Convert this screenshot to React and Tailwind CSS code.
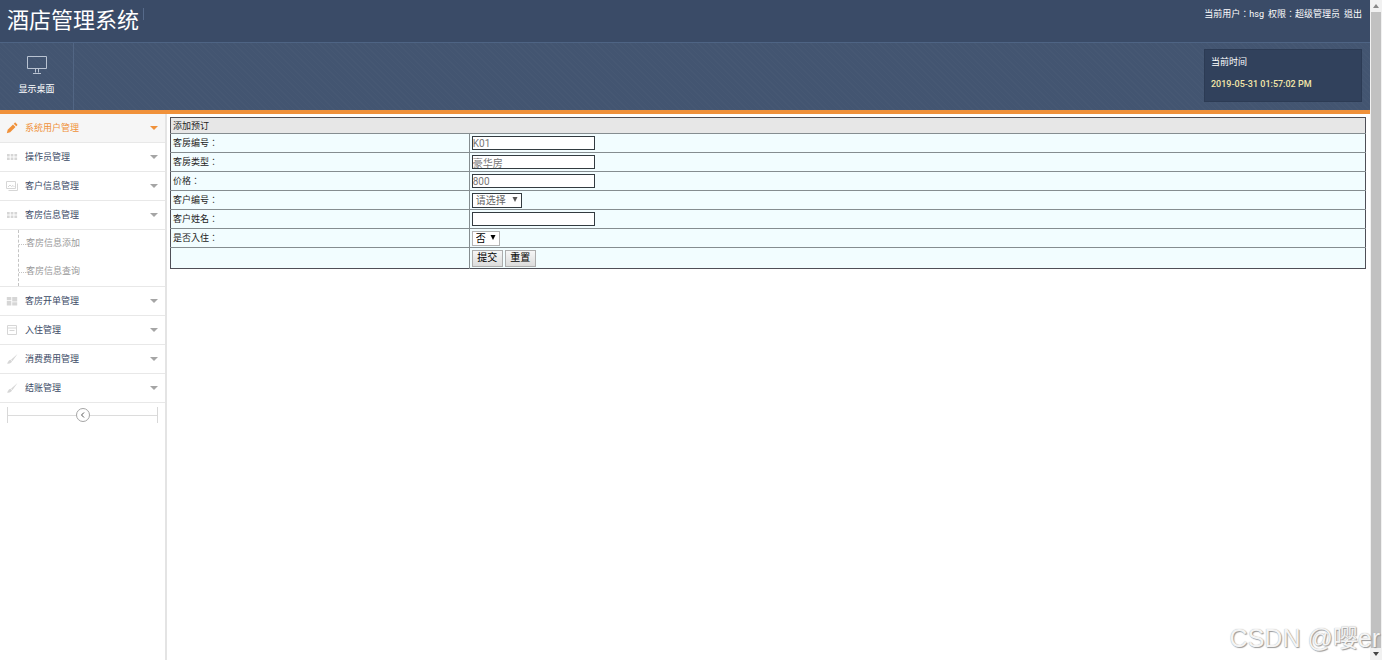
import React, { useState } from "react";

// Sidebar icons
const PencilIcon = () => (
  <svg className="w-3 h-3" viewBox="0 0 12 12" fill="currentColor" aria-hidden="true">
    <path d="M.8 11.200l.9-3.400L7 2.500l2.500 2.500-5.300 5.300z" />
    <path d="M7.700 1.800l.9-.9c.4-.4.8-.4 1.200 0l1.300 1.300c.4.4.4.8 0 1.200l-.9.9z" />
  </svg>
);

const GridIcon = () => (
  <svg className="w-3 h-3" viewBox="0 0 12 12" fill="currentColor" aria-hidden="true">
    <path d="M1 3h2.700v2.500H1zM4.700 3h2.700v2.500H4.700zM8.400 3h2.700v2.500H8.400zM1 6.500h2.700V9H1zM4.700 6.500h2.700V9H4.700zM8.400 6.500h2.700V9H8.400z" />
  </svg>
);

const PicturesIcon = () => (
  <svg className="w-3 h-3" viewBox="0 0 12 12" fill="none" stroke="currentColor" aria-hidden="true">
    <path d="M.5 1.500h9v7h-9zM2.500 10.500h9v-7M2 7l2-2 1.500 1.500L7 5.500 8.500 7" />
  </svg>
);

const BlocksIcon = () => (
  <svg className="w-3 h-3" viewBox="0 0 12 12" fill="currentColor" aria-hidden="true">
    <path d="M.8 2h4.500v3.200H.8zM.8 6h4.500v4.500H.8zM6.200 2h5v4.500h-5zM6.200 7.300h5v3.200h-5z" />
  </svg>
);

const CalendarIcon = () => (
  <svg className="w-3 h-3" viewBox="0 0 12 12" fill="none" stroke="currentColor" aria-hidden="true">
    <path d="M1.500 1.500h9v9h-9zM1.500 4h9M3.500 6.500h5" />
  </svg>
);

const BrushIcon = () => (
  <svg className="w-3 h-3" viewBox="0 0 12 12" fill="currentColor" aria-hidden="true">
    <path d="M11.500 1L6.500 8 5 6.700zM4.300 6.700L6 8.300C5.500 10.500 3 11 .8 10.600 2 10 2 7.300 4.300 6.700z" />
  </svg>
);

const Caret = () => (
  <svg className="w-2 h-1" viewBox="0 0 8 4" fill="currentColor" aria-hidden="true">
    <path d="M0 0h8L4 4z" />
  </svg>
);

const menus = [
  { name: "系统用户管理", icon: PencilIcon, active: true },
  { name: "操作员管理", icon: GridIcon },
  { name: "客户信息管理", icon: PicturesIcon },
  { name: "客房信息管理", icon: GridIcon, children: ["客房信息添加", "客房信息查询"] },
  { name: "客房开单管理", icon: BlocksIcon },
  { name: "入住管理", icon: CalendarIcon },
  { name: "消费费用管理", icon: BrushIcon },
  { name: "结账管理", icon: BrushIcon },
];

function Header() {
  return (
    <header className="border-b-4 border-[#f0913a] bg-[#435571] bg-[repeating-linear-gradient(45deg,#ffffff04_0px,#ffffff04_1px,transparent_1px,transparent_4px)] text-white">
      <div className="flex h-[42px] items-start justify-between bg-[#3a4b67] pl-[7px] pr-2">
        <div className="flex items-start">
          <h1 className="text-[22px] leading-[42px]">酒店管理系统</h1>
          <span className="ml-1 mt-2 h-3 w-px bg-[#566a8a]"></span>
        </div>
        <div className="flex gap-1 pt-2 font-[Roboto,'Noto_Sans_CJK_TC',sans-serif] text-[9px] leading-3">
          <span>当前用户：hsg</span>
          <span>权限：超级管理员</span>
          <a href="#logout">退出</a>
        </div>
      </div>
      <div className="flex h-[68px] justify-between border-t border-[#4e6484] pr-2">
        <button
          type="button"
          className="flex w-[74px] flex-col items-center gap-2 border-r border-[#526684] pt-3 text-[9px] leading-3"
        >
          <svg className="h-5 w-5" viewBox="0 0 20 20" fill="none" stroke="#b9c3d2" aria-hidden="true">
            <path d="M.5 1.500h19v12H.5zM8.500 13.500v4M11.500 13.500v4M6 18.500h8" />
          </svg>
          显示桌面
        </button>
        <div className="mt-1.5 h-[53px] w-[158px] border border-[#2c3b54] bg-[#31415c] px-1.5 pt-1.5 text-[9px] leading-3">
          <p>当前时间</p>
          <p className="mt-2 leading-4 font-medium text-[#f3e6a9]">2019-05-31 01:57:02 PM</p>
        </div>
      </div>
    </header>
  );
}

function Sidebar() {
  return (
    <aside className="w-[167px] shrink-0 border-r-2 border-[#e4e4e4] text-[9px] text-[#3b4a66]">
      <nav>
        {menus.map((menu) => (
          <div key={menu.name} className="border-b border-[#e8e8e8]">
            <a
              href="#menu"
              className={
                menu.active
                  ? "flex h-7 items-center bg-[#f6f6f6] pl-1.5 pr-[7px] text-[#f0913a]"
                  : "flex h-7 items-center pl-1.5 pr-[7px]"
              }
            >
              <span className={menu.active ? "text-[#f0913a]" : "text-[#d6d6d6]"}>
                <menu.icon />
              </span>
              <span className="ml-[7px] flex-1 pt-0.5">{menu.name}</span>
              <span className={menu.active ? "text-[#f0913a]" : "text-[#a5a5a5]"}>
                <Caret />
              </span>
            </a>
            {menu.children && (
              <div className="border-t border-[#e8e8e8]">
                <ul className="ml-[18px] border-l border-dashed border-[#c4c4c4] text-[#999]">
                  {menu.children.map((child) => (
                    <li key={child} className="flex h-7 items-center">
                      <span className="w-[7px] border-t border-dotted border-[#c4c4c4]"></span>
                      <a href="#sub">{child}</a>
                    </li>
                  ))}
                </ul>
              </div>
            )}
          </div>
        ))}
      </nav>
      <div className="mx-[7px] mt-1 flex h-4 items-center border-x border-[#d8d8d8]">
        <span className="h-px flex-1 bg-[#dcdcdc]"></span>
        <button
          type="button"
          aria-label="收起菜单"
          className="flex h-3.5 w-3.5 items-center justify-center rounded-full border border-[#a5a5a5]"
        >
          <svg className="h-2 w-2" viewBox="0 0 8 8" fill="none" stroke="#555" aria-hidden="true">
            <path d="M5 1.500L2.500 4 5 6.500" />
          </svg>
        </button>
        <span className="h-px flex-1 bg-[#dcdcdc]"></span>
      </div>
    </aside>
  );
}

function Row({ label, id, children }) {
  return (
    <tr className="h-[19px] border-t border-[#858d90]">
      <td className="w-[25%] border-r border-[#858d90] pl-0.5">
        <label htmlFor={id} className="font-[Roboto,'Noto_Sans_CJK_TC',sans-serif]">
          {label}
        </label>
      </td>
      <td className="pl-0.5">{children}</td>
    </tr>
  );
}

const inputClass =
  "block h-3.5 w-[123px] border border-[#333b40] bg-white text-[10px] leading-3 text-[#777]";

const buttonClass =
  "h-[17px] w-[31px] border border-[#adadad] bg-linear-to-b from-[#f6f6f6] to-[#dcdcdc] text-[10px] leading-3 text-black";

function SelectArrow() {
  return (
    <svg className="pointer-events-none absolute right-1 top-1 h-1.5 w-1.5" viewBox="0 0 6 6" fill="currentColor" aria-hidden="true">
      <path d="M.5 0h5L3 5z" />
    </svg>
  );
}

function BookingForm() {
  const [form, setForm] = useState({ customer: "", name: "", checkin: "否" });

  const handleChange = (e) => {
    setForm({ ...form, [e.target.name]: e.target.value });
  };

  return (
    <form onSubmit={(e) => e.preventDefault()}>
      <table className="w-full border-collapse border border-[#4f4f57] bg-[#f2fdff] text-[9px] leading-3 text-[#222]">
        <thead>
          <tr className="h-4 bg-[#e7e7e7]">
            <th colSpan={2} className="pl-0.5 text-left font-normal">
              添加预订
            </th>
          </tr>
        </thead>
        <tbody>
          <Row label="客房编号：" id="room">
            <input id="room" className={inputClass} value="K01" disabled />
          </Row>
          <Row label="客房类型：" id="type">
            <input id="type" className={inputClass} value="豪华房" disabled />
          </Row>
          <Row label="价格：" id="price">
            <input id="price" className={inputClass} value="800" disabled />
          </Row>
          <Row label="客户编号：" id="customer">
            <div className="relative w-[50px] text-[#555]">
              <select
                id="customer"
                name="customer"
                value={form.customer}
                onChange={handleChange}
                className="block h-[15px] w-full appearance-none border border-[#333b40] bg-white pl-[3px] pt-px text-[10px] leading-3 text-[#666]"
              >
                <option value="">请选择</option>
              </select>
              <SelectArrow />
            </div>
          </Row>
          <Row label="客户姓名：" id="name">
            <input id="name" name="name" className={inputClass} value={form.name} onChange={handleChange} />
          </Row>
          <Row label="是否入住：" id="checkin">
            <div className="relative w-7 text-black">
              <select
                id="checkin"
                name="checkin"
                value={form.checkin}
                onChange={handleChange}
                className="block h-[15px] w-full appearance-none border border-[#b4b4b4] bg-white pl-[3px] pt-px text-[10px] leading-3"
              >
                <option>否</option>
                <option>是</option>
              </select>
              <SelectArrow />
            </div>
          </Row>
          <tr className="h-[21px] border-t border-[#858d90]">
            <td className="border-r border-[#858d90]"></td>
            <td className="pl-0.5">
              <div className="flex gap-0.5">
                <button type="submit" className={buttonClass}>
                  提交
                </button>
                <button type="reset" className={buttonClass}>
                  重置
                </button>
              </div>
            </td>
          </tr>
        </tbody>
      </table>
    </form>
  );
}

// Scrollbar of the outer frame
function ScrollTrack() {
  return (
    <div className="flex w-3 shrink-0 flex-col items-center justify-between bg-[#f1f1f1] text-[#888]" aria-hidden="true">
      <svg className="my-1 h-1 w-1.5" viewBox="0 0 6 4" fill="currentColor">
        <path d="M0 4h6L3 0z" />
      </svg>
      <div className="w-2.5 flex-1 bg-[#c1c1c1]"></div>
      <svg className="my-1 h-1 w-1.5 text-[#444]" viewBox="0 0 6 4" fill="currentColor">
        <path d="M0 0h6L3 4z" />
      </svg>
    </div>
  );
}

export default function App() {
  return (
    <div className="relative flex min-h-screen overflow-hidden bg-white font-[Roboto,'Noto_Sans_CJK_SC',sans-serif]">
      <div className="flex min-w-0 flex-1 flex-col">
        <Header />
        <div className="flex flex-1">
          <Sidebar />
          <main className="min-w-0 flex-1 py-[3px] pl-[3px] pr-1">
            <BookingForm />
          </main>
        </div>
      </div>
      <ScrollTrack />
      <div className="pointer-events-none absolute bottom-1.5 right-0.5 font-['Liberation_Sans','Noto_Sans_CJK_SC',sans-serif] text-[25px] leading-8 text-[#f4f4f4] [text-shadow:1px_1px_1px_#999,0_0_1px_#aaa]">
        CSDN @嘤er
      </div>
    </div>
  );
}
